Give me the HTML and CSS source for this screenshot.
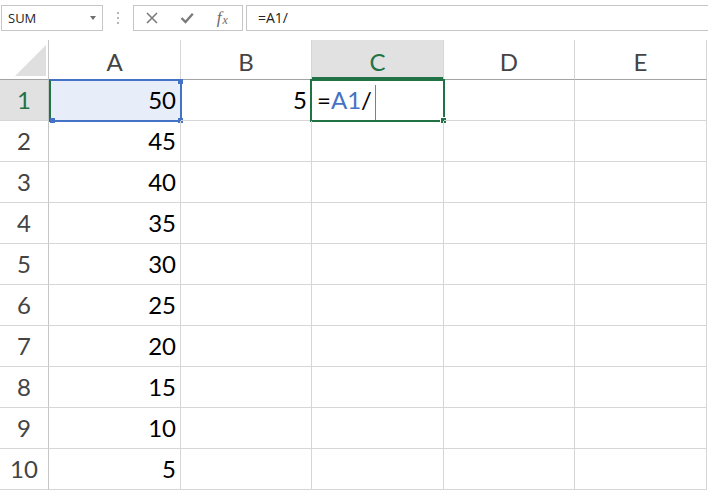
FILE: index.html
```html
<!DOCTYPE html>
<html lang="en">
<head>
<meta charset="utf-8">
<title>Sheet</title>
<link rel="stylesheet" href="styles.css">
</head>
<body>
<div class="app">
  <div class="formula-bar">
    <div class="name-box"><span class="name-text">SUM</span><span class="dropdown"></span></div>
    <div class="grip">
      <svg width="4" height="14" viewBox="0 0 4 14"><rect x="1" y="1" width="2" height="2" fill="#b5b5b5"/><rect x="1" y="6" width="2" height="2" fill="#b5b5b5"/><rect x="1" y="11" width="2" height="2" fill="#b5b5b5"/></svg>
    </div>
    <div class="fx-buttons">
      <span class="fx-btn"><svg width="12" height="12" viewBox="0 0 12 12"><path d="M1 1 L11 11 M11 1 L1 11" stroke="#7b7b7b" stroke-width="1.6" fill="none"/></svg></span>
      <span class="fx-btn"><svg width="14" height="12" viewBox="0 0 14 12"><path d="M1.5 6 L5.5 10 L12.8 1.8" stroke="#7b7b7b" stroke-width="2.4" fill="none"/></svg></span>
      <span class="fx-btn fx-label"><span class="fx-f">f</span><span class="fx-x">x</span></span>
    </div>
    <div class="formula-input">=A1/</div>
  </div>

  <div class="sheet">
    <div class="corner"><svg width="31" height="31" viewBox="0 0 31 31"><polygon points="31,0 31,31 0,31" fill="#dfdfdf"/></svg></div>
    <div class="col-head">A</div>
    <div class="col-head">B</div>
    <div class="col-head active">C</div>
    <div class="col-head">D</div>
    <div class="col-head">E</div>

    <div class="row-head active">1</div>
    <div class="cell num ref">50<span class="ref-box"><span class="h h-tr"></span><span class="h h-bl"></span><span class="h h-br"></span></span></div>
    <div class="cell num">5</div>
    <div class="cell edit">=<span class="ref-text">A1</span>/<span class="caret"></span><span class="sel-box"><span class="fill-handle"></span></span></div>
    <div class="cell"></div>
    <div class="cell"></div>

    <div class="row-head">2</div><div class="cell num">45</div><div class="cell"></div><div class="cell"></div><div class="cell"></div><div class="cell"></div>
    <div class="row-head">3</div><div class="cell num">40</div><div class="cell"></div><div class="cell"></div><div class="cell"></div><div class="cell"></div>
    <div class="row-head">4</div><div class="cell num">35</div><div class="cell"></div><div class="cell"></div><div class="cell"></div><div class="cell"></div>
    <div class="row-head">5</div><div class="cell num">30</div><div class="cell"></div><div class="cell"></div><div class="cell"></div><div class="cell"></div>
    <div class="row-head">6</div><div class="cell num">25</div><div class="cell"></div><div class="cell"></div><div class="cell"></div><div class="cell"></div>
    <div class="row-head">7</div><div class="cell num">20</div><div class="cell"></div><div class="cell"></div><div class="cell"></div><div class="cell"></div>
    <div class="row-head">8</div><div class="cell num">15</div><div class="cell"></div><div class="cell"></div><div class="cell"></div><div class="cell"></div>
    <div class="row-head">9</div><div class="cell num">10</div><div class="cell"></div><div class="cell"></div><div class="cell"></div><div class="cell"></div>
    <div class="row-head">10</div><div class="cell num">5</div><div class="cell"></div><div class="cell"></div><div class="cell"></div><div class="cell"></div>
  </div>
</div>
</body>
</html>
```

FILE: styles.css
```css
html, body {
  margin: 0;
  padding: 0;
  background: #ffffff;
}
body {
  width: 708px;
  height: 492px;
  overflow: hidden;
}
.app {
  width: 708px;
}

/* formula bar */
.formula-bar {
  display: flex;
  align-items: flex-start;
  height: 40px;
  padding-top: 5px;
  box-sizing: border-box;
  font-family: "Open Sans", "DejaVu Sans", sans-serif;
}
.name-box {
  margin-left: 1px;
  width: 102px;
  height: 26px;
  box-sizing: border-box;
  border: 1px solid #c6c6c6;
  display: flex;
  align-items: center;
  justify-content: space-between;
  padding: 0 6px 0 6px;
}
.name-text {
  font-size: 13px;
  color: #262626;
}
.dropdown {
  width: 0;
  height: 0;
  border-left: 3.5px solid transparent;
  border-right: 3.5px solid transparent;
  border-top: 4px solid #6e6e6e;
}
.grip {
  width: 30px;
  height: 26px;
  display: flex;
  align-items: center;
  justify-content: center;
}
.fx-buttons {
  width: 110px;
  height: 26px;
  box-sizing: border-box;
  border: 1px solid #c6c6c6;
  display: flex;
  align-items: center;
}
.fx-btn {
  flex: 1;
  display: flex;
  align-items: center;
  justify-content: center;
  height: 100%;
}
.fx-label {
  font-family: "Liberation Serif", "DejaVu Serif", serif;
  font-style: italic;
  color: #6a6a6a;
  padding-right: 2px;
}
.fx-f {
  font-size: 17px;
}
.fx-x {
  font-size: 12px;
  margin-top: 4px;
  margin-left: 1px;
}
.formula-input {
  flex: 1;
  margin-left: 3px;
  margin-right: -4px;
  height: 26px;
  box-sizing: border-box;
  border: 1px solid #c6c6c6;
  padding-left: 11px;
  font-size: 14px;
  line-height: 23px;
  color: #222222;
}

/* sheet grid */
.sheet {
  display: grid;
  grid-template-columns: 49px 132px 131px 132px 131px 132px;
  grid-template-rows: 40px repeat(10, 41px) 12px;
  font-family: Lato, "Open Sans", sans-serif;
  font-size: 24px;
}
.corner {
  border-right: 1px solid #c6c6c6;
  border-bottom: 1px solid #a3a3a3;
  display: flex;
  align-items: flex-end;
  justify-content: flex-end;
  padding: 0 2px 3px 0;
  box-sizing: border-box;
}
.col-head {
  border-right: 1px solid #d6d6d6;
  border-bottom: 1px solid #a3a3a3;
  box-sizing: border-box;
  text-align: center;
  color: #444444;
  line-height: 35px;
  padding-top: 4px;
}
.col-head.active {
  background: #e1e1e1;
  color: #217346;
  border-bottom-color: #217346;
  box-shadow: inset 0 -2px 0 #217346;
}
.row-head {
  border-right: 1px solid #c6c6c6;
  border-bottom: 1px solid #d6d6d6;
  box-sizing: border-box;
  text-align: center;
  color: #444444;
  line-height: 40px;
}
.row-head.active {
  background: #e1e1e1;
  color: #217346;
}
.cell {
  position: relative;
  border-right: 1px solid #d6d6d6;
  border-bottom: 1px solid #d6d6d6;
  box-sizing: border-box;
  line-height: 40px;
  color: #000000;
  white-space: nowrap;
}
.cell.num {
  text-align: right;
  padding-right: 4px;
}
.cell.ref {
  background: #e7eefa;
}
.ref-box {
  position: absolute;
  left: 0;
  top: -1px;
  right: -2px;
  bottom: -2px;
  border: 2px solid #4472c4;
  border-left-color: #217346;
}
.h {
  position: absolute;
  width: 5px;
  height: 5px;
  background: #4472c4;
}
.h-tr { top: -2px; right: -3px; }
.h-bl { bottom: -3px; left: -1px; }
.h-br { bottom: -3px; right: -3px; }

.cell.edit {
  padding-left: 5px;
}
.ref-text {
  color: #4472c4;
}
.caret {
  display: inline-block;
  width: 1px;
  height: 36px;
  background: #808080;
  margin-left: 3px;
  vertical-align: middle;
}
.sel-box {
  position: absolute;
  left: -2px;
  top: -1px;
  right: -2px;
  bottom: -2px;
  border: 2px solid #217346;
}
.fill-handle {
  position: absolute;
  right: -3px;
  bottom: -3px;
  width: 5px;
  height: 5px;
  background: #217346;
  border-left: 1px solid #ffffff;
  border-top: 1px solid #ffffff;
}
```
